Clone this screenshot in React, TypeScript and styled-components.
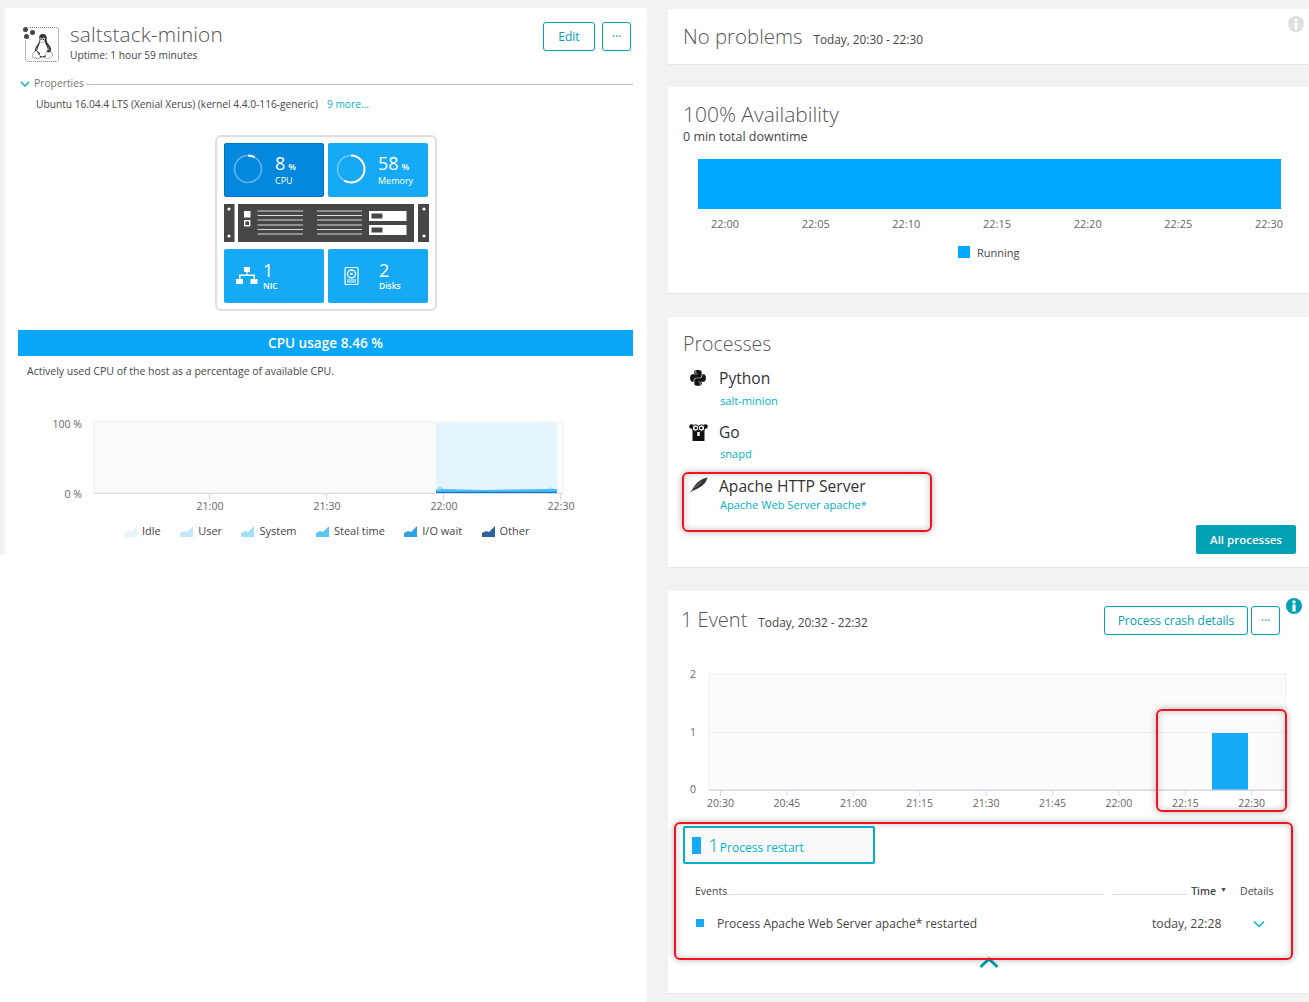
import React from "react";
import styled, { createGlobalStyle } from "styled-components";
import { FaPython, FaLinux } from "react-icons/fa";

const Global = createGlobalStyle`
  html, body { margin: 0; padding: 0; background: #f2f2f2; }
  body { font-family: "Open Sans", "Liberation Sans", sans-serif; color: #454646; }
  * { box-sizing: border-box; }
`;

const TEAL = "#00a1b2";
const LINK = "#00b3c7";
const BLUE = "#16a9f5";

const Page = styled.div`
  display: flex;
  width: 1309px;
  height: 1002px;
  overflow: hidden;
  background: #f2f2f2;
`;
const LeftColumn = styled.div`
  width: 647px;
  flex: none;
  background: #fff;
`;
const LeftGutter = styled.div`
  background: #f2f2f2;
  padding: 8px 0 0 5px;
`;
const HostPanel = styled.section`
  background: #fff;
  height: 547px;
  padding: 14px 14px 0 13px;
`;
const HostHeader = styled.header`
  display: flex;
  align-items: flex-start;
  height: 42px;
  margin-left: 4px;
`;
const HostIcon = styled.div`
  position: relative;
  width: 37px;
  height: 37px;
  flex: none;
  margin-top: 3px;
`;
const HostBox = styled.div`
  position: absolute;
  left: 3px;
  top: 2px;
  right: 0;
  bottom: 0;
  border: 1px dotted #777;
  border-radius: 3px;
  display: flex;
  align-items: center;
  justify-content: center;
  font-size: 25px;
  padding-top: 4px;
  color: #333;
`;
const Dot = styled.i<{ $x: number; $y: number }>`
  position: absolute;
  left: ${(p) => p.$x}px;
  top: ${(p) => p.$y}px;
  width: 5px;
  height: 5px;
  border-radius: 50%;
  background: #444;
  box-shadow: 0 0 0 1px #fff;
`;
const HostTitles = styled.div`
  margin-left: 11px;
  margin-top: -1px;
`;
const HostName = styled.h1`
  margin: 0;
  font-size: 20.8px;
  font-weight: 300;
  line-height: 26px;
  color: #555;
  letter-spacing: 0.1px;
`;
const Uptime = styled.div`
  font-size: 10.2px;
  line-height: 14px;
  margin-top: 1px;
`;
const Actions = styled.div<{ $gap: number; $mr: number }>`
  display: flex;
  margin-left: auto;
  margin-right: ${(p) => p.$mr}px;
  gap: ${(p) => p.$gap}px;
`;
const OutlineButton = styled.button<{ $w: number }>`
  width: ${(p) => p.$w}px;
  height: 29px;
  padding: 0;
  background: #fff;
  border: 1px solid ${TEAL};
  border-radius: 3px;
  color: ${TEAL};
  font: 400 12px "Open Sans", sans-serif;
`;
const PropertiesHead = styled.div`
  display: flex;
  align-items: center;
  gap: 4px;
  margin: 11px 0 0 2px;
  height: 16px;
  font-size: 10.3px;
  color: #777;
`;
const Rule = styled.span`
  flex: 1;
  height: 1px;
  background: #bbb;
  margin-left: -2px;
  margin-top: 2px;
`;
const PropertiesText = styled.div`
  margin: 6px 0 0 18px;
  font-size: 10.2px;
  line-height: 14px;
  display: flex;
  gap: 9px;
`;
const LinkText = styled.span`
  color: ${LINK};
`;
const Infographic = styled.div`
  width: 222px;
  height: 176px;
  margin: 24px 0 0 197px;
  border: 2px solid #dedede;
  border-radius: 6px;
  padding: 6px 6px 0 7px;
`;
const TileRow = styled.div`
  display: flex;
  gap: 4px;
`;
const Tile = styled.div<{ $active?: boolean }>`
  width: 100px;
  height: 54px;
  border-radius: 2px;
  display: flex;
  align-items: center;
  color: #fff;
  background: ${(p) => (p.$active ? "#0388dd" : BLUE)};
  border: ${(p) => (p.$active ? "1px solid #0373be" : "none")};
  padding-left: 8px;
`;
const Ring = styled.svg`
  width: 30px;
  height: 30px;
  flex: none;
  margin-top: -2px;
`;
const TileGlyph = styled.svg`
  width: 24px;
  height: 24px;
  flex: none;
  margin-left: 3px;
`;
const TileText = styled.div<{ $gap: number }>`
  margin-left: ${(p) => p.$gap}px;
`;
const TileValue = styled.div`
  font-size: 18px;
  line-height: 18px;
  font-weight: 400;
  small {
    font-size: 9px;
    font-weight: 600;
    margin-left: 3px;
  }
`;
const TileLabel = styled.div<{ $bold?: boolean }>`
  font-size: ${(p) => (p.$bold ? "8.5px" : "9px")};
  line-height: 11px;
  margin-top: ${(p) => (p.$bold ? "1px" : "-1px")};
  font-weight: ${(p) => (p.$bold ? 600 : 400)};
`;
const Rack = styled.svg`
  display: block;
  width: 205px;
  height: 38px;
  margin: 7px 0;
`;
const UsageBar = styled.div`
  height: 26px;
  margin: 19px 0 0 0;
  background: #0aa6f7;
  color: #fff;
  font-size: 13.6px;
  font-weight: 600;
  line-height: 25px;
  text-align: center;
`;
const UsageNote = styled.p`
  margin: 8px 0 0 9px;
  font-size: 10.5px;
  line-height: 14px;
`;
const CpuChart = styled.svg`
  display: block;
  width: 620px;
  height: 108px;
  margin: 37px 0 0 0;
  font-family: "Open Sans", sans-serif;
`;
const Legend = styled.div`
  display: flex;
  margin: 1px 0 0 106px;
  gap: 19.4px;
  font-size: 11px;
  line-height: 14px;
`;
const LegendEntry = styled.span`
  display: flex;
  align-items: center;
  gap: 5px;
`;
const LegendSwatch = styled.svg`
  width: 13px;
  height: 11px;
  flex: none;
`;

const RightColumn = styled.main`
  width: 641px;
  margin-left: 21px;
  padding-top: 9px;
  display: flex;
  flex-direction: column;
`;
const Panel = styled.section<{ $h: number; $mb: number }>`
  position: relative;
  height: ${(p) => p.$h}px;
  margin-bottom: ${(p) => p.$mb}px;
  background: #fff;
  box-shadow: 0 1px 0 #e6e6e6;
  padding: 0 15px;
`;
const HeadRow = styled.div`
  display: flex;
  align-items: baseline;
  gap: 11px;
  padding-top: 12px;
`;
const PanelTitle = styled.h2<{ $size: number }>`
  margin: 0;
  font-size: ${(p) => p.$size}px;
  line-height: 30px;
  font-weight: 300;
  color: #555;
`;
const PanelMeta = styled.span`
  font-size: 11.8px;
  color: #454646;
`;
const InfoBadge = styled.svg<{ $right: number; $top: number }>`
  position: absolute;
  right: ${(p) => p.$right}px;
  top: ${(p) => p.$top}px;
  width: 16px;
  height: 16px;
`;
const AvailabilityHead = styled.div`
  padding-top: 12px;
`;
const Downtime = styled.div`
  font-size: 12.5px;
  line-height: 17px;
  margin-top: -1px;
`;
const AvailabilityBar = styled.div`
  height: 50px;
  margin: 14px 13px 0 15px;
  background: #00a8ff;
`;
const TimeAxis = styled.div`
  display: flex;
  justify-content: space-between;
  margin: 8px 11px 0 28px;
  font-size: 11px;
  line-height: 14px;
  color: #666;
`;
const RunningLegend = styled.div`
  display: flex;
  align-items: center;
  gap: 7px;
  margin: 15px 0 0 275px;
  font-size: 11px;
  line-height: 14px;
`;
const RunningSwatch = styled.i`
  width: 12px;
  height: 12px;
  background: #00a8ff;
  margin-top: -3px;
`;
const ProcessHead = styled.div`
  padding-top: 12px;
`;
const ProcessList = styled.div`
  margin-top: 7px;
`;
const ProcessRow = styled.div<{ $h: number }>`
  display: grid;
  grid-template-columns: 36px 1fr;
  height: ${(p) => p.$h}px;
`;
const ProcessGlyph = styled.div`
  padding: 3px 0 0 6px;
  color: #111;
  font-size: 18px;
  line-height: 18px;
`;
const ProcessName = styled.div`
  font-size: 15.6px;
  line-height: 24px;
  color: #333;
`;
const ProcessLink = styled.div<{ $mt: number }>`
  font-size: 11.1px;
  line-height: 14px;
  margin: ${(p) => p.$mt}px 0 0 1px;
  color: ${LINK};
`;
const SolidButton = styled.button`
  position: absolute;
  right: 13px;
  bottom: 13px;
  width: 100px;
  height: 29px;
  border: 0;
  padding: 0;
  border-radius: 2px;
  background: ${TEAL};
  color: #fff;
  font: 600 11.5px "Open Sans", sans-serif;
`;
const Highlight = styled.div<{ $l: number; $t: number; $w: number; $h: number }>`
  position: absolute;
  left: ${(p) => p.$l}px;
  top: ${(p) => p.$t}px;
  width: ${(p) => p.$w}px;
  height: ${(p) => p.$h}px;
  border: 2px solid #f0141e;
  border-radius: 6px;
  box-shadow: 0 0 7px rgba(0, 0, 0, 0.3), inset 0 0 7px rgba(0, 0, 0, 0.22);
  pointer-events: none;
`;
const EventHead = styled.div`
  display: flex;
  align-items: flex-start;
  padding: 15px 14px 0 0;
  margin-left: -2px;
`;
const EventTitles = styled.div`
  display: flex;
  align-items: baseline;
  gap: 11px;
  margin-top: -1px;
`;
const EventChart = styled.svg`
  display: block;
  width: 641px;
  height: 150px;
  margin: 29px 0 0 -15px;
  font-family: "Open Sans", sans-serif;
`;
const RestartTab = styled.div`
  display: flex;
  align-items: center;
  width: 192px;
  height: 38px;
  margin: 12px 0 0 0;
  padding-left: 7px;
  border: 2px solid #00b3c7;
  border-radius: 2px;
  background: #f9f9f9;
`;
const RestartBlock = styled.i`
  width: 9px;
  height: 17px;
  background: ${BLUE};
`;
const RestartCount = styled.span`
  margin-left: 7px;
  font-size: 19px;
  font-weight: 300;
  color: #00a1b2;
`;
const RestartLabel = styled.span`
  margin-left: 1px;
  margin-top: 4px;
  font-size: 12px;
  color: ${LINK};
`;
const TableHead = styled.div`
  display: flex;
  align-items: center;
  margin: 20px 0 0 12px;
  height: 14px;
  font-size: 10.5px;
`;
const HeadRule = styled.span<{ $w: number; $ml: number }>`
  width: ${(p) => p.$w}px;
  height: 1px;
  margin: 6px 0 0 ${(p) => p.$ml}px;
  background: #ddd;
`;
const TimeHead = styled.b`
  margin-left: 4px;
  font-weight: 600;
`;
const SortMark = styled.span`
  margin-left: 4px;
  font-size: 7px;
  margin-top: -3px;
`;
const DetailsHead = styled.span`
  margin-left: 13px;
`;
const EventRow = styled.div`
  display: flex;
  align-items: center;
  margin: 13px 0 0 13px;
  height: 24px;
  font-size: 12px;
`;
const EventSquare = styled.i`
  width: 8px;
  height: 8px;
  background: ${BLUE};
`;
const EventText = styled.span`
  margin-left: 13px;
  width: 435px;
`;
const EventTime = styled.span`
  width: 100px;
  font-size: 12.2px;
  font-weight: 500;
`;
const RowChevron = styled.svg`
  width: 12px;
  height: 8px;
  margin-left: 1px;
  margin-top: 1px;
`;
const Collapse = styled.svg`
  position: absolute;
  left: 311px;
  top: 366px;
  width: 20px;
  height: 12px;
`;
const PropChevron = styled.svg`
  width: 10px;
  height: 7px;
  flex: none;
  margin-top: 2px;
`;

const Arc = ({ pct }: { pct: number }) => {
  const r = 13.5;
  const c = 2 * Math.PI * r;
  return (
    <Ring viewBox="0 0 30 30">
      <circle cx="15" cy="15" r={r} fill="none" stroke="rgba(255,255,255,.38)" strokeWidth="1.6" />
      <circle
        cx="15"
        cy="15"
        r={r}
        fill="none"
        stroke="#fff"
        strokeWidth="2"
        strokeDasharray={`${(c * pct) / 100} ${c}`}
        transform="rotate(-90 15 15)"
      />
    </Ring>
  );
};

const Info = ({ color, right, top }: { color: string; right: number; top: number }) => (
  <InfoBadge viewBox="0 0 16 16" $right={right} $top={top}>
    <circle cx="8" cy="8" r="8" fill={color} />
    <circle cx="8" cy="4" r="1.7" fill="#fff" />
    <rect x="6.4" y="6.5" width="3.2" height="7" rx=".6" fill="#fff" />
  </InfoBadge>
);

const legend = [
  ["Idle", "#e6f5fc"],
  ["User", "#c5e9fa"],
  ["System", "#a5e0fb"],
  ["Steal time", "#5cc4f5"],
  ["I/O wait", "#2e9fe3"],
  ["Other", "#2e5f9e"],
];

const rackLines = [7, 11.5, 16, 21, 25.5, 30];

const eventTicks = ["20:30", "20:45", "21:00", "21:15", "21:30", "21:45", "22:00", "22:15", "22:30"];

export default function App() {
  return (
    <Page>
      <Global />
      <LeftColumn>
        <LeftGutter>
          <HostPanel>
            <HostHeader>
              <HostIcon>
                <HostBox>
                  <FaLinux />
                </HostBox>
                <Dot $x={1} $y={2} />
                <Dot $x={8} $y={5} />
                <Dot $x={2} $y={9} />
              </HostIcon>
              <HostTitles>
                <HostName>saltstack-minion</HostName>
                <Uptime>Uptime: 1 hour 59 minutes</Uptime>
              </HostTitles>
              <Actions $gap={7} $mr={2}>
                <OutlineButton $w={52}>Edit</OutlineButton>
                <OutlineButton $w={29}>···</OutlineButton>
              </Actions>
            </HostHeader>
            <PropertiesHead>
              <PropChevron viewBox="0 0 10 7">
                <path d="M1 1l4 4 4-4" fill="none" stroke={LINK} strokeWidth="1.5" />
              </PropChevron>
              Properties
              <Rule />
            </PropertiesHead>
            <PropertiesText>
              <span>Ubuntu 16.04.4 LTS (Xenial Xerus) (kernel 4.4.0-116-generic)</span>
              <LinkText>9 more...</LinkText>
            </PropertiesText>
            <Infographic>
              <TileRow>
                <Tile $active>
                  <Arc pct={8} />
                  <TileText $gap={12}>
                    <TileValue>
                      8<small>%</small>
                    </TileValue>
                    <TileLabel>CPU</TileLabel>
                  </TileText>
                </Tile>
                <Tile>
                  <Arc pct={58} />
                  <TileText $gap={12}>
                    <TileValue>
                      58<small>%</small>
                    </TileValue>
                    <TileLabel>Memory</TileLabel>
                  </TileText>
                </Tile>
              </TileRow>
              <Rack viewBox="0 0 205 38">
                <rect x="0" width="10.5" height="38" fill="#454646" />
                <rect x="14" width="176" height="38" fill="#454646" />
                <rect x="194" width="11" height="38" fill="#454646" />
                <circle cx="5" cy="5" r="1.6" fill="#fff" />
                <circle cx="5" cy="32" r="1.6" fill="#fff" />
                <circle cx="200" cy="5" r="1.6" fill="#fff" />
                <circle cx="200" cy="32" r="1.6" fill="#fff" />
                <rect x="20" y="7" width="6.5" height="6.5" fill="#fff" />
                <rect x="20.7" y="16.7" width="5" height="5" fill="#454646" stroke="#fff" strokeWidth="1.4" />
                {rackLines.map((y) => (
                  <g key={y}>
                    <rect x="33.5" y={y - 0.5} width="45.5" height="1" fill="#d8d8d8" />
                    <rect x="93" y={y - 0.5} width="45" height="1" fill="#d8d8d8" />
                  </g>
                ))}
                <rect x="145" y="7" width="37.5" height="10" fill="#fff" />
                <rect x="145" y="21" width="37.5" height="10" fill="#fff" />
                <rect x="147.5" y="9.5" width="11" height="5" fill="#454646" />
                <rect x="147.5" y="23.5" width="11" height="5" fill="#454646" />
              </Rack>
              <TileRow>
                <Tile>
                  <TileGlyph viewBox="0 0 24 24">
                    <path
                      d="M9 3h6v5h-2.4v2.5H20V15h2.500v5h-7v-5H18.500v-3h-13v3H8v5H1v-5h3V10.500h7.400V8H9z"
                      fill="#fff"
                    />
                  </TileGlyph>
                  <TileText $gap={4}>
                    <TileValue>1</TileValue>
                    <TileLabel $bold>NIC</TileLabel>
                  </TileText>
                </Tile>
                <Tile>
                  <TileGlyph viewBox="0 0 24 24">
                    <rect x="6" y="3.500" width="13" height="17" rx="1" fill="none" stroke="#fff" strokeWidth="1.2" />
                    <circle cx="12.500" cy="10" r="4" fill="none" stroke="#fff" strokeWidth="1.4" />
                    <circle cx="12.500" cy="10" r="1.300" fill="#fff" />
                    <path d="M8 16h9M8 18h9" stroke="#fff" strokeWidth="1" />
                  </TileGlyph>
                  <TileText $gap={16}>
                    <TileValue>2</TileValue>
                    <TileLabel $bold>Disks</TileLabel>
                  </TileText>
                </Tile>
              </TileRow>
            </Infographic>
            <UsageBar>CPU usage 8.46 %</UsageBar>
            <UsageNote>Actively used CPU of the host as a percentage of available CPU.</UsageNote>
            <CpuChart viewBox="18 415 620 108">
              <rect x="94" y="422" width="469" height="71" fill="#fbfbfb" stroke="#f0f0f0" />
              <rect x="436" y="423" width="121" height="70" fill="#e4f4fc" />
              <path d="M436 493v-4l4-3 5 4 30 1 40-1 30 1 6-4 5 3v3z" fill="#a5e0fb" />
              <path d="M436 493v-3l8-1 40 1 60-1 13 0v4z" fill="#4dbdf5" />
              <rect x="436" y="491.800" width="121" height="1.200" fill="#1278c4" />
              <rect x="94" y="493" width="469" height="1" fill="#d4d9ea" />
              {[209, 326, 443, 560].map((x) => (
                <rect key={x} x={x} y="493" width="1" height="7" fill="#d4d9ea" />
              ))}
              <g fontSize="10.500" fill="#666">
                <text x="82" y="428" textAnchor="end">100 %</text>
                <text x="82" y="498" textAnchor="end">0 %</text>
                <text x="210" y="510" textAnchor="middle">21:00</text>
                <text x="327" y="510" textAnchor="middle">21:30</text>
                <text x="444" y="510" textAnchor="middle">22:00</text>
                <text x="561" y="510" textAnchor="middle">22:30</text>
              </g>
            </CpuChart>
            <Legend>
              {legend.map(([label, color]) => (
                <LegendEntry key={label}>
                  <LegendSwatch viewBox="0 0 13 11">
                    <path d="M0 11V7l4-2 3 1 6-6v11z" fill={color} />
                  </LegendSwatch>
                  {label}
                </LegendEntry>
              ))}
            </Legend>
          </HostPanel>
        </LeftGutter>
      </LeftColumn>
      <RightColumn>
        <Panel $h={55} $mb={23}>
          <HeadRow>
            <PanelTitle $size={20.4}>No problems</PanelTitle>
            <PanelMeta>Today, 20:30 - 22:30</PanelMeta>
          </HeadRow>
          <Info color="#dfdfdf" right={5} top={7} />
        </Panel>
        <Panel $h={206} $mb={24}>
          <AvailabilityHead>
            <PanelTitle $size={21}>100% Availability</PanelTitle>
            <Downtime>0 min total downtime</Downtime>
          </AvailabilityHead>
          <AvailabilityBar />
          <TimeAxis>
            <span>22:00</span>
            <span>22:05</span>
            <span>22:10</span>
            <span>22:15</span>
            <span>22:20</span>
            <span>22:25</span>
            <span>22:30</span>
          </TimeAxis>
          <RunningLegend>
            <RunningSwatch />
            Running
          </RunningLegend>
        </Panel>
        <Panel $h={250} $mb={24}>
          <ProcessHead>
            <PanelTitle $size={19.5}>Processes</PanelTitle>
          </ProcessHead>
          <ProcessList>
            <ProcessRow $h={54}>
              <ProcessGlyph>
                <FaPython />
              </ProcessGlyph>
              <div>
                <ProcessName>Python</ProcessName>
                <ProcessLink $mt={4}>salt-minion</ProcessLink>
              </div>
            </ProcessRow>
            <ProcessRow $h={54}>
              <ProcessGlyph>
                <svg width="19" height="19" viewBox="0 0 19 19">
                  <path d="M3.500 5h12v13h-12z" fill="#111" />
                  <circle cx="2.500" cy="3.500" r="2.300" fill="#111" />
                  <circle cx="16.500" cy="3.500" r="2.300" fill="#111" />
                  <circle cx="6.500" cy="5" r="3.200" fill="#fff" stroke="#111" />
                  <circle cx="12.500" cy="5" r="3.200" fill="#fff" stroke="#111" />
                  <circle cx="6.800" cy="5" r="1.300" fill="#111" />
                  <circle cx="12.200" cy="5" r="1.300" fill="#111" />
                  <path d="M8.300 9h2.400v4H8.300z" fill="#fff" />
                </svg>
              </ProcessGlyph>
              <div>
                <ProcessName>Go</ProcessName>
                <ProcessLink $mt={3}>snapd</ProcessLink>
              </div>
            </ProcessRow>
            <ProcessRow $h={50}>
              <ProcessGlyph>
                <svg width="19" height="17" viewBox="0 0 19 17">
                  <path
                    d="M.5 16.500C2 14 3 12.800 4 11.200 6 7.800 9.500 4 13 2.300 15 1.300 17 .8 18.500.5 17.800 3 16.500 5.500 14.500 7.500 11.500 10.500 7 12.500 3.500 13.700 2.500 14.500 1.500 15.500.5 16.500Z"
                    fill="#333"
                  />
                  <path d="M5 11l8-6.500" stroke="#999" strokeWidth=".6" />
                </svg>
              </ProcessGlyph>
              <div>
                <ProcessName>Apache HTTP Server</ProcessName>
                <ProcessLink $mt={0}>Apache Web Server apache*</ProcessLink>
              </div>
            </ProcessRow>
          </ProcessList>
          <SolidButton>All processes</SolidButton>
          <Highlight $l={14} $t={155} $w={250} $h={60} />
        </Panel>
        <Panel $h={402} $mb={0}>
          <EventHead>
            <EventTitles>
              <PanelTitle $size={20}>1 Event</PanelTitle>
              <PanelMeta>Today, 20:32 - 22:32</PanelMeta>
            </EventTitles>
            <Actions $gap={3} $mr={0}>
              <OutlineButton $w={144}>Process crash details</OutlineButton>
              <OutlineButton $w={29}>···</OutlineButton>
            </Actions>
          </EventHead>
          <Info color={TEAL} right={7} top={7} />
          <EventChart viewBox="668 664 641 150">
            <rect x="709" y="674" width="577" height="116" fill="#fbfbfb" stroke="#f0f0f0" />
            <rect x="709" y="732" width="577" height="1" fill="#efefef" />
            <rect x="1212" y="733" width="36" height="57" fill={BLUE} />
            <rect x="709" y="789.500" width="577" height="1.500" fill="#d4d9ea" />
            {eventTicks.map((t, i) => (
              <rect key={t} x={720 + i * 66.4} y="790" width="1" height="6" fill="#d4d9ea" />
            ))}
            <g fontSize="10.500" fill="#666">
              <text x="693" y="678" textAnchor="middle">2</text>
              <text x="693" y="736" textAnchor="middle">1</text>
              <text x="693" y="793" textAnchor="middle">0</text>
              {eventTicks.map((t, i) => (
                <text key={t} x={720.500 + i * 66.4} y="807" textAnchor="middle">
                  {t}
                </text>
              ))}
            </g>
          </EventChart>
          <RestartTab>
            <RestartBlock />
            <RestartCount>1</RestartCount>
            <RestartLabel>Process restart</RestartLabel>
          </RestartTab>
          <TableHead>
            Events
            <HeadRule $w={375} $ml={2} />
            <HeadRule $w={74} $ml={9} />
            <TimeHead>Time</TimeHead>
            <SortMark>▼</SortMark>
            <DetailsHead>Details</DetailsHead>
          </TableHead>
          <EventRow>
            <EventSquare />
            <EventText>Process Apache Web Server apache* restarted</EventText>
            <EventTime>today, 22:28</EventTime>
            <RowChevron viewBox="0 0 12 8">
              <path d="M1 1.500l5 5 5-5" fill="none" stroke={LINK} strokeWidth="1.500" />
            </RowChevron>
          </EventRow>
          <Collapse viewBox="0 0 20 12">
            <path d="M1.500 10L10 2l8.500 8" fill="none" stroke={TEAL} strokeWidth="3" />
          </Collapse>
          <Highlight $l={488} $t={118} $w={131} $h={103} />
          <Highlight $l={6} $t={231} $w={619} $h={138} />
        </Panel>
      </RightColumn>
    </Page>
  );
}
